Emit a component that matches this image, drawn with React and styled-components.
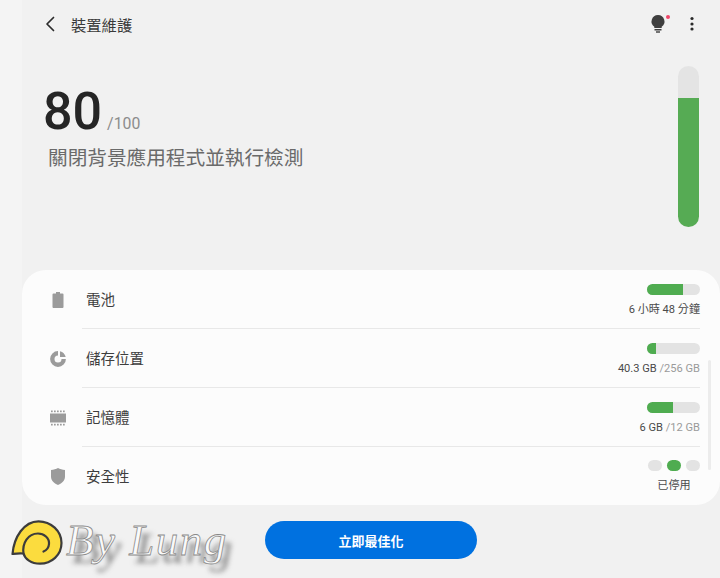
import React from "react";
import styled, { createGlobalStyle } from "styled-components";

const Global = createGlobalStyle`
  html, body {
    margin: 0;
    padding: 0;
    background: #f4f4f4;
    font-family: Roboto, "Noto Sans CJK TC", sans-serif;
  }
`;

const Page = styled.div`
  position: relative;
  width: 720px;
  height: 578px;
  overflow: hidden;
  background: #f4f4f4;
`;

const Main = styled.div`
  display: flex;
  flex-direction: column;
  height: 578px;
  margin-left: 22px;
  background: #f1f1f1;
`;

const Header = styled.div`
  display: flex;
  align-items: center;
  height: 50px;
  padding: 0 26px 2px 22px;
  box-sizing: border-box;
`;

const Title = styled.div`
  margin-left: 15px;
  flex: 1;
  font-size: 15.3px;
  color: #3a3a3a;
`;

const BulbWrap = styled.div`
  position: relative;
  width: 16px;
  height: 24px;
  margin-right: 24px;
`;

const RedDot = styled.span`
  position: absolute;
  top: 3px;
  right: -4px;
  width: 4px;
  height: 4px;
  border-radius: 50%;
  background: #f0476a;
`;

const Summary = styled.div`
  display: flex;
  justify-content: space-between;
  height: 220px;
  padding: 16px 21px 0 21px;
  box-sizing: border-box;
`;

const ScoreLine = styled.div`
  display: flex;
  align-items: baseline;
  height: 70px;
  margin-top: 11px;
`;

const Score = styled.span`
  font-size: 52px;
  line-height: 70px;
  font-weight: 500;
  color: #252525;
`;

const Total = styled.span`
  margin-left: 5px;
  font-size: 15.8px;
  color: #8c8c8c;
`;

const Hint = styled.div`
  margin: -2px 0 0 5px;
  font-size: 19.65px;
  line-height: 28px;
  color: #6a6a6a;
`;

const Meter = styled.div`
  display: flex;
  flex-direction: column;
  justify-content: flex-end;
  width: 21px;
  height: 161px;
  border-radius: 11px;
  overflow: hidden;
  background: #e4e4e4;
`;

const MeterFill = styled.div`
  height: ${(p) => p.$height}px;
  background: #56ab54;
`;

const Card = styled.div`
  position: relative;
  height: 235px;
  border-radius: 24px;
  background: #fcfcfc;
  overflow: hidden;
`;

const Row = styled.div`
  display: flex;
  align-items: center;
  height: 59px;
  padding: 0 20px 0 24px;
  box-sizing: border-box;
`;

const RowIcon = styled.div`
  display: flex;
  align-items: center;
  justify-content: center;
  width: 24px;
  margin-right: 12px;
`;

const RowBody = styled.div`
  flex: 1;
  align-self: stretch;
  display: flex;
  align-items: center;
  justify-content: space-between;
  padding-left: 4px;
  border-bottom: ${(p) => (p.$last ? "none" : "1px solid #e8e8e8")};
`;

const Label = styled.div`
  font-size: 14.5px;
  margin-top: ${(p) => (p.$last ? "-2px" : "-1px")};
  color: #3e3e3e;
`;

const Status = styled.div`
  display: flex;
  flex-direction: column;
  align-items: flex-end;
  gap: 7px;
  margin-top: 2px;
`;

const Track = styled.div`
  width: 53px;
  height: 11px;
  border-radius: 6px;
  overflow: hidden;
  background: #e3e3e3;
`;

const TrackFill = styled.div`
  width: ${(p) => p.$width}px;
  height: 100%;
  background: #4fac50;
`;

const DotStatus = styled.div`
  display: flex;
  flex-direction: column;
  align-items: center;
  gap: 7px;
  margin-top: -1px;
`;

const Dots = styled.div`
  display: flex;
  gap: 5px;
`;

const Dot = styled.span`
  width: 14px;
  height: 11px;
  border-radius: 6px;
  background: ${(p) => (p.$on ? "#4fac50" : "#e3e3e3")};
`;

const Value = styled.div`
  font-size: 11.1px;
  line-height: 15px;
  color: #4a4a4a;
  white-space: nowrap;
`;

const ValueMuted = styled.span`
  color: #9a9a9a;
`;

const Scrollbar = styled.div`
  position: absolute;
  top: 90px;
  right: 9px;
  width: 3px;
  height: 110px;
  border-radius: 2px;
  background: #ececec;
`;

const Footer = styled.div`
  flex: 1;
  display: flex;
  justify-content: center;
  padding-top: 16px;
`;

const OptimizeButton = styled.button`
  width: 212px;
  height: 38px;
  border: none;
  border-radius: 19px;
  background: #0071e0;
  color: #fff;
  font-family: Roboto, "Noto Sans CJK TC", sans-serif;
  font-size: 13px;
  font-weight: 700;
`;

const Watermark = styled.div`
  position: absolute;
  left: 11px;
  top: 519px;
  display: flex;
  align-items: center;
`;

const WatermarkText = styled.span`
  margin: -4px 0 0 3px;
  font-family: "Liberation Serif", serif;
  font-style: italic;
  font-size: 45px;
  line-height: 50px;
  letter-spacing: 1.5px;
  white-space: nowrap;
  color: #fafafa;
  -webkit-text-stroke: 0.8px #8a8a8a;
  text-shadow: 6px 8px 5px rgba(80, 80, 80, 0.65);
`;

const Chevron = () => (
  <svg width="12" height="16" viewBox="0 0 12 16" fill="none">
    <path d="M9.5 1.500 3 8l6.500 6.500" stroke="#2c2c2c" strokeWidth="1.700" strokeLinecap="round" strokeLinejoin="round" />
  </svg>
);

const Bulb = () => (
  <svg width="16" height="24" viewBox="0 0 16 24">
    <path d="M8 3a6.500 6.500 0 0 1 3.700 11.800V16H4.300v-1.200A6.500 6.500 0 0 1 8 3Z" fill="#3f3f3f" />
    <rect x="4.500" y="17" width="7" height="1.500" fill="#3f3f3f" />
    <rect x="6" y="19.300" width="4" height="1.400" fill="#3f3f3f" />
  </svg>
);

const More = () => (
  <svg width="4" height="16" viewBox="0 0 4 16" fill="#2a2a2a">
    <circle cx="2" cy="2.500" r="1.600" />
    <circle cx="2" cy="8" r="1.600" />
    <circle cx="2" cy="13" r="1.600" />
  </svg>
);

const BatteryIcon = () => (
  <svg width="12" height="16" viewBox="0 0 12 16" fill="#9b9b9b">
    <path d="M4 0h4v1.500h2.500a1 1 0 0 1 1 1V15a1 1 0 0 1-1 1h-9a1 1 0 0 1-1-1V2.500a1 1 0 0 1 1-1H4Z" />
  </svg>
);

const StorageIcon = () => (
  <svg width="16" height="16" viewBox="0 0 16 16" fill="none">
    <path d="M8 2.300A5.700 5.700 0 1 0 13.700 8" stroke="#9b9b9b" strokeWidth="4.400" />
    <path d="M10 .3A8 8 0 0 1 15.700 6H10Z" fill="#9b9b9b" />
  </svg>
);

const MemoryIcon = () => (
  <svg width="16" height="16" viewBox="0 0 16 16" fill="#9b9b9b">
    <rect x="0" y="3.500" width="16" height="9" />
    {[1, 4, 7, 10, 13].map((x) => (
      <React.Fragment key={x}>
        <rect x={x} y="0.500" width="1.700" height="1.700" />
        <rect x={x} y="13.800" width="1.700" height="1.700" />
      </React.Fragment>
    ))}
  </svg>
);

const ShieldIcon = () => (
  <svg width="14" height="17" viewBox="0 0 14 17" fill="#9b9b9b">
    <path d="M7 0c2 1.200 4.300 1.800 7 2v6.500c0 3.800-2.800 6.800-7 8.500-4.200-1.700-7-4.700-7-8.500V2c2.700-.2 5-.8 7-2Z" />
  </svg>
);

const Snail = () => (
  <svg width="52" height="46" viewBox="0 0 52 46">
    <path
      d="M1.500 35C3 18 13 2.300 27.500 2.300 40 2.300 50.500 12 50.500 24 50.500 36 40.500 44.700 29 44.700 20 44.700 14 40 12.500 34.500 8 34 5 34.500 1.500 35Z"
      fill="#fbdc3e"
      stroke="#3c3c3c"
      strokeWidth="2.200"
      strokeLinejoin="round"
    />
    <path
      d="M12.500 34.500C11 24 17 14.500 27 14.500c6 0 11.500 4.500 11 10.500-.3 4-3 6.500-5.500 7.500"
      fill="none"
      stroke="#3c3c3c"
      strokeWidth="2.200"
      strokeLinecap="round"
    />
  </svg>
);

const rows = [
  {
    label: "電池",
    icon: <BatteryIcon />,
    status: (
      <Status>
        <Track><TrackFill $width={36} /></Track>
        <Value>6 小時 48 分鐘</Value>
      </Status>
    ),
  },
  {
    label: "儲存位置",
    icon: <StorageIcon />,
    status: (
      <Status>
        <Track><TrackFill $width={9} /></Track>
        <Value>40.3 GB <ValueMuted>/256 GB</ValueMuted></Value>
      </Status>
    ),
  },
  {
    label: "記憶體",
    icon: <MemoryIcon />,
    status: (
      <Status>
        <Track><TrackFill $width={26} /></Track>
        <Value>6 GB <ValueMuted>/12 GB</ValueMuted></Value>
      </Status>
    ),
  },
  {
    label: "安全性",
    icon: <ShieldIcon />,
    status: (
      <DotStatus>
        <Dots><Dot /><Dot $on /><Dot /></Dots>
        <Value>已停用</Value>
      </DotStatus>
    ),
  },
];

export default function App() {
  return (
    <Page>
      <Global />
      <Main>
        <Header>
          <Chevron />
          <Title>裝置維護</Title>
          <BulbWrap>
            <Bulb />
            <RedDot />
          </BulbWrap>
          <More />
        </Header>
        <Summary>
          <div>
            <ScoreLine>
              <Score>80</Score>
              <Total>/100</Total>
            </ScoreLine>
            <Hint>關閉背景應用程式並執行檢測</Hint>
          </div>
          <Meter>
            <MeterFill $height={129} />
          </Meter>
        </Summary>
        <Card>
          {rows.map((row, i) => (
            <Row key={row.label}>
              <RowIcon>{row.icon}</RowIcon>
              <RowBody $last={i === rows.length - 1}>
                <Label $last={i === rows.length - 1}>{row.label}</Label>
                {row.status}
              </RowBody>
            </Row>
          ))}
          <Scrollbar />
        </Card>
        <Footer>
          <OptimizeButton>立即最佳化</OptimizeButton>
        </Footer>
      </Main>
      <Watermark>
        <Snail />
        <WatermarkText>By Lung</WatermarkText>
      </Watermark>
    </Page>
  );
}
